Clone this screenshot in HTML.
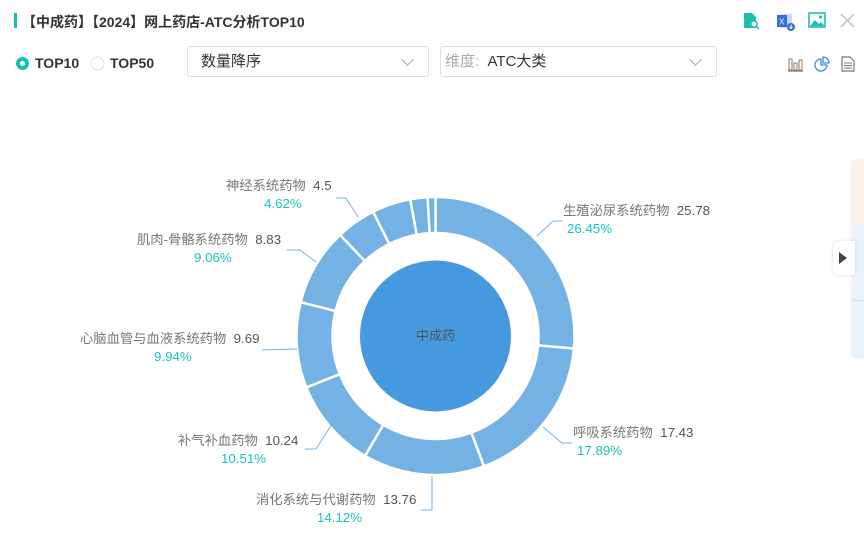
<!DOCTYPE html>
<html><head><meta charset="utf-8">
<style>
body{margin:0;width:864px;height:556px;background:#fff;overflow:hidden;position:relative;font-family:"Liberation Sans","Noto Sans CJK SC",sans-serif;}
.abs{position:absolute;}
.title{left:14px;top:12px;font-size:14px;font-weight:bold;color:#333;}
.bar{left:14px;top:13px;width:3px;height:15px;background:#1bbfad;}
.sel{height:31px;border:1px solid #dcdfe6;border-radius:3px;top:46px;box-sizing:border-box;font-size:15px;color:#333;line-height:29px;padding-left:13px;}
.chev{position:absolute;right:16px;top:8px;width:8px;height:8px;border-right:1px solid #aaa;border-bottom:1px solid #aaa;transform:rotate(45deg);}
.lbl{font-size:13.3px;color:#777;white-space:nowrap;margin-top:-2px;}
.lbl b{font-weight:normal;color:#555;}
.pct{font-size:13.3px;color:#19c2bc;white-space:nowrap;margin-top:-1px;}
</style></head><body>
<div class="abs bar"></div>
<div class="abs title" style="left:22px">【中成药】【2024】网上药店-ATC分析TOP10</div>

<svg class="abs" style="left:742px;top:12px" width="18" height="18" viewBox="0 0 18 18"><path d="M2 1h8l4 4v11H2z" fill="#1bbfad"/><circle cx="12" cy="12" r="3.2" fill="#fff" stroke="#1bbfad" stroke-width="1.5"/><path d="M14 14l3 3" stroke="#1bbfad" stroke-width="1.5"/></svg>
<svg class="abs" style="left:776px;top:12px" width="20" height="20" viewBox="0 0 20 20"><rect x="5" y="2" width="11" height="14" fill="#c9d9f5"/><rect x="1" y="3" width="10" height="12" fill="#2f6fd6"/><text x="3" y="12.5" font-size="8" fill="#fff" font-family="Liberation Sans">X</text><circle cx="15" cy="15" r="4" fill="#2f6fd6"/><path d="M15 12.5v4M13.5 15l1.5 1.5 1.5-1.5" stroke="#fff" fill="none" stroke-width="1"/></svg>
<svg class="abs" style="left:808px;top:12px" width="18" height="16" viewBox="0 0 18 16"><rect x="1" y="1" width="16" height="14" fill="none" stroke="#1bbfad" stroke-width="1.6"/><path d="M2 14l5-6 4 4 2-2 4 4z" fill="#1bbfad"/><circle cx="12.5" cy="5" r="1.6" fill="#1bbfad"/></svg>
<svg class="abs" style="left:840px;top:13px" width="15" height="15"><path d="M1 1l13 13M14 1L1 14" stroke="#c8c8c8" stroke-width="1.6"/></svg>

<svg class="abs" style="left:15px;top:56px" width="15" height="15"><circle cx="7.5" cy="7.5" r="6.5" fill="#1bbfad"/><circle cx="7.5" cy="7.5" r="2.5" fill="#fff"/></svg>
<div class="abs" style="left:35px;top:55px;font-size:14px;font-weight:bold;color:#333">TOP10</div>
<svg class="abs" style="left:90px;top:56px" width="15" height="15"><circle cx="7.5" cy="7.5" r="6.5" fill="#fff" stroke="#dcdfe6"/></svg>
<div class="abs" style="left:110px;top:55px;font-size:14px;font-weight:bold;color:#333">TOP50</div>

<div class="abs sel" style="left:187px;width:242px">数量降序<span class="chev"></span></div>
<div class="abs sel" style="left:440px;width:277px;padding-left:4px"><span style="color:#aaa">维度:</span>&nbsp; ATC大类<span class="chev"></span></div>

<svg class="abs" style="left:787px;top:56px" width="17" height="16"><path d="M1 15h15" stroke="#8a7a6a" stroke-width="1.3"/><rect x="2" y="3" width="3" height="11" fill="none" stroke="#8a7a6a"/><rect x="7" y="7" width="3" height="7" fill="none" stroke="#8a7a6a"/><rect x="12" y="4" width="3" height="10" fill="none" stroke="#8a7a6a"/></svg>
<svg class="abs" style="left:814px;top:56px" width="16" height="16"><path d="M7 3a6 6 0 1 0 6 6H7z" fill="none" stroke="#3a8fe0" stroke-width="1.3"/><path d="M9 1a6 6 0 0 1 6 6H9z" fill="none" stroke="#3a8fe0" stroke-width="1.3"/></svg>
<svg class="abs" style="left:841px;top:56px" width="14" height="16"><path d="M1 1h8l4 4v10H1z" fill="none" stroke="#777" stroke-width="1.2"/><path d="M3 7h8M3 9.5h8M3 12h8" stroke="#777"/></svg>

<svg class="abs" style="left:0;top:0" width="864" height="556" id="ch">
<g id="sl"></g>
<circle cx="435.5" cy="336" r="75.5" fill="#4499df"/>
<text x="435.5" y="340" text-anchor="middle" font-size="13" fill="#555" font-family="Liberation Sans,Noto Sans CJK SC,sans-serif">中成药</text>
<g fill="none" stroke="#74b2e6" stroke-width="1">
<polyline points="537,236 553,221 563,221"/>
<polyline points="543,427 562,443 572,443"/>
<polyline points="432,476 432,510 421,510"/>
<polyline points="334,421 316,449 305,449"/>
<polyline points="297,349 262,350"/>
<polyline points="316,262 300,250 287,250"/>
<polyline points="358,217 346,198 336,198"/>
</g>
</svg>

<div class="abs lbl" style="left:563px;top:202px">生殖泌尿系统药物&nbsp; <b>25.78</b></div>
<div class="abs pct" style="left:567px;top:222px">26.45%</div>
<div class="abs lbl" style="left:573px;top:424px">呼吸系统药物&nbsp; <b>17.43</b></div>
<div class="abs pct" style="left:577px;top:444px">17.89%</div>
<div class="abs lbl" style="left:256px;top:491px">消化系统与代谢药物&nbsp; <b>13.76</b></div>
<div class="abs pct" style="left:317px;top:511px">14.12%</div>
<div class="abs lbl" style="left:178px;top:432px">补气补血药物&nbsp; <b>10.24</b></div>
<div class="abs pct" style="left:221px;top:452px">10.51%</div>
<div class="abs lbl" style="left:80px;top:330px">心脑血管与血液系统药物&nbsp; <b>9.69</b></div>
<div class="abs pct" style="left:154px;top:350px">9.94%</div>
<div class="abs lbl" style="left:137px;top:231px">肌肉-骨骼系统药物&nbsp; <b>8.83</b></div>
<div class="abs pct" style="left:194px;top:251px">9.06%</div>
<div class="abs lbl" style="left:226px;top:177px">神经系统药物&nbsp; <b>4.5</b></div>
<div class="abs pct" style="left:264px;top:197px">4.62%</div>

<div class="abs" style="left:852px;top:160px;width:20px;height:198px;border-radius:4px;background:#eaf2fd;box-shadow:0 0 3px rgba(0,0,0,.12);overflow:hidden"><div style="height:65px;background:#fdf1ea"></div><div style="height:75px;border-bottom:1px solid #d8e3f3"></div></div>
<div class="abs" style="left:833px;top:241px;width:22px;height:34px;background:#fff;border-radius:5px 0 0 5px;box-shadow:0 0 3px rgba(0,0,0,.15)"></div>
<svg class="abs" style="left:838px;top:251px" width="10" height="14"><path d="M1 1l8 6-8 6z" fill="#444"/></svg>

<script>
var p=[26.45,17.89,14.12,10.51,9.94,9.06,4.62,4.5,2.0,0.91],s=p.reduce(function(a,b){return a+b},0);
var cx=435.5,cy=336,R=139,r=103,a=0,h='';
function pt(rad,ang){return [cx+rad*Math.sin(ang),cy-rad*Math.cos(ang)];}
p.forEach(function(v){var a0=a/s*2*Math.PI,a1=(a+v)/s*2*Math.PI;a+=v;
var l=(a1-a0)>Math.PI?1:0,A=pt(R,a0),B=pt(R,a1),C=pt(r,a1),D=pt(r,a0);
h+='<path d="M'+A+'A'+R+' '+R+' 0 '+l+' 1 '+B+'L'+C+'A'+r+' '+r+' 0 '+l+' 0 '+D+'Z" fill="#74b2e6" stroke="#fff" stroke-width="2.5" stroke-linejoin="round"/>';});
document.getElementById('sl').innerHTML=h;
</script>
</body></html>
